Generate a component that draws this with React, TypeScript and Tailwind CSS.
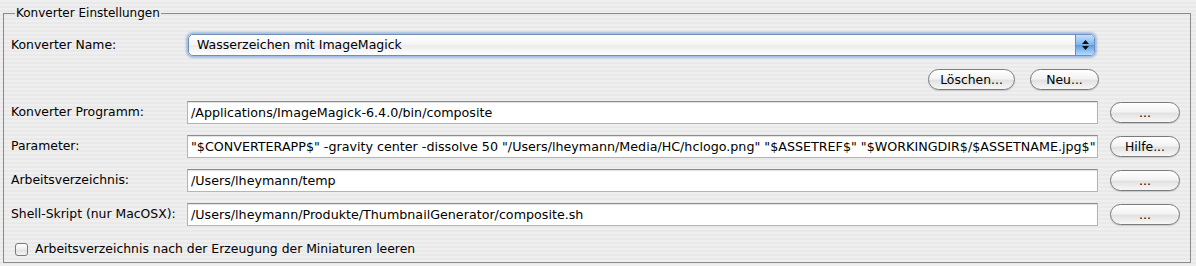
import React from 'react';

const font = "font-['DejaVu_Sans','Liberation_Sans',sans-serif]";

function AquaButton({ label, width }: { label: string; width: string }) {
  return (
    <button
      className={`${width} h-[21px] rounded-full border border-[#7a7a7a] bg-[linear-gradient(#ffffff,#f3f3f3_45%,#e2e2e2_55%,#f7f7f7)] shadow-[0_1px_1px_rgba(0,0,0,0.15)] text-[12.4px] leading-[19px] text-black flex items-center justify-center`}
    >
      {label}
    </button>
  );
}

function TextField({ value }: { value: string }) {
  return (
    <div className="w-[911px] h-[23px] bg-white border border-[#b4b4b4] border-t-[#8c8c8c] shadow-[inset_0_1px_1px_rgba(0,0,0,0.12)] px-[3px] text-[12.7px] leading-[21px] text-black whitespace-nowrap overflow-hidden">
      {value}
    </div>
  );
}

export default function App() {
  const rows = [
    { label: 'Konverter Programm:', value: '/Applications/ImageMagick-6.4.0/bin/composite', button: '...' },
    {
      label: 'Parameter:',
      value:
        '"$CONVERTERAPP$" -gravity center -dissolve 50 "/Users/lheymann/Media/HC/hclogo.png" "$ASSETREF$" "$WORKINGDIR$/$ASSETNAME.jpg$"',
      button: 'Hilfe...',
    },
    { label: 'Arbeitsverzeichnis:', value: '/Users/lheymann/temp', button: '...' },
    { label: 'Shell-Skript (nur MacOSX):', value: '/Users/lheymann/Produkte/ThumbnailGenerator/composite.sh', button: '...' },
  ];

  return (
    <div
      className={`w-[1196px] h-[266px] overflow-hidden pt-[5px] bg-[repeating-linear-gradient(180deg,#efefef_0px,#efefef_2px,#e9e9e9_2px,#e9e9e9_4px)] ${font} text-black`}
    >
      <fieldset className="ml-[3px] w-[1188px] h-[258px] border border-[#8a8a8a] pl-[7px]">
        <legend className="ml-[4px] px-[1px] text-[12px] leading-[16px]">Konverter Einstellungen</legend>

        {/* Konverter Name */}
        <div className="mt-[12px] flex items-center h-[24px]">
          <div className="w-[177px] text-[12.4px]">Konverter Name:</div>
          <div className="w-[907px] h-[22px] rounded-[5px] border border-[#6f8fb8] shadow-[0_0_2px_2px_rgba(100,150,220,0.55)] bg-[linear-gradient(#ffffff,#f4f4f4_50%,#ebebeb_51%,#ffffff)] flex items-stretch overflow-hidden">
            <div className="flex-1 pl-[8px] text-[12.5px] leading-[20px]">Wasserzeichen mit ImageMagick</div>
            <div className="w-[19px] border-l border-[#6f8fb8] bg-[linear-gradient(#c5e0fb,#7db4ee_50%,#5a9ae6_51%,#b6dcfd)] flex flex-col items-center justify-center gap-[2px]">
              <svg width="7" height="4" viewBox="0 0 7 4"><path d="M3.5 0L7 4H0z" fill="#111" /></svg>
              <svg width="7" height="4" viewBox="0 0 7 4"><path d="M0 0h7L3.5 4z" fill="#111" /></svg>
            </div>
          </div>
        </div>

        {/* Löschen / Neu */}
        <div className="mt-[12px] flex justify-end gap-[15px] pr-[91px]">
          <AquaButton label="Löschen..." width="w-[87px]" />
          <AquaButton label="Neu..." width="w-[69px]" />
        </div>

        {/* Fields */}
        <div className="mt-[11px] flex flex-col gap-[11px]">
          {rows.map((r) => (
            <div key={r.label} className="flex items-center h-[23px]">
              <div className="w-[176px] text-[12.4px] whitespace-nowrap">{r.label}</div>
              <TextField value={r.value} />
              <div className="ml-[12px]">
                <AquaButton label={r.button} width="w-[70px]" />
              </div>
            </div>
          ))}
        </div>

        {/* Checkbox */}
        <div className="mt-[14px] flex items-center gap-[7px] pl-[4px]">
          <div className="w-[13px] h-[13px] rounded-[3px] border border-[#7a7a7a] bg-[linear-gradient(#ffffff,#ececec_50%,#dedede_51%,#f5f5f5)]" />
          <div className="text-[12.4px]">Arbeitsverzeichnis nach der Erzeugung der Miniaturen leeren</div>
        </div>
      </fieldset>
    </div>
  );
}
